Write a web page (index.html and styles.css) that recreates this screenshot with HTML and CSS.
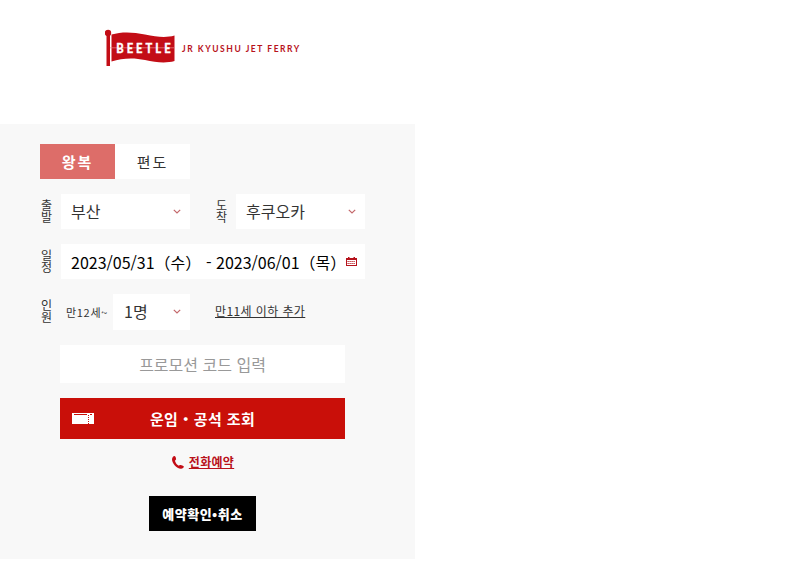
FILE: index.html
```html
<!DOCTYPE html>
<html lang="ko">
<head>
    <meta charset="UTF-8">
    <meta name="viewport" content="width=device-width, initial-scale=1.0">
    <title>BEETLE - JR KYUSHU JET FERRY</title>
    <link rel="stylesheet" href="styles.css">
</head>
<body>
    <header class="header">
        <svg class="logo" width="200" height="40" viewBox="0 0 200 40" role="img" aria-label="BEETLE">
            <circle cx="3" cy="4" r="3.2" fill="#c30d16"/>
            <rect x="1.500" y="5" width="3.500" height="32" fill="#c30d16"/>
            <path d="M6.500 5.500C17 2.500 28 3 40 5.500S61 9 69.500 6.500V32C61 34.500 51 33.500 40 31S17 29 6.500 32.500Z" fill="#c30d16"/>
            <path d="M5 18.800H69.500" stroke="#e78a8e" stroke-width=".7"/>
            <text class="logo-name" x="14" y="24" textLength="68" transform="scale(.8 1)">BEETLE</text>
            <text class="logo-sub" x="90.600" y="23" textLength="138" transform="scale(.85 1)">JR KYUSHU JET FERRY</text>
        </svg>
    </header>

    <form class="booking">
        <div class="tabs">
            <button type="button" class="tab active">왕복</button>
            <button type="button" class="tab">편도</button>
        </div>

        <div class="row">
            <span class="label"><span>출</span><span>발</span></span>
            <div class="select">부산
                <svg class="arrow" width="8" height="5" viewBox="0 0 8 5"><path d="M.8.8 4 4 7.200.8"/></svg>
            </div>
            <span class="label label-to"><span>도</span><span>착</span></span>
            <div class="select">후쿠오카
                <svg class="arrow" width="8" height="5" viewBox="0 0 8 5"><path d="M.8.8 4 4 7.200.8"/></svg>
            </div>
        </div>

        <div class="row">
            <span class="label"><span>일</span><span>정</span></span>
            <div class="dates">
                <span class="date-from">2023/05/31（수）</span>
                <span class="dash">-</span>
                <span class="date-to">2023/06/01（목）</span>
                <svg class="calendar" width="11" height="9" viewBox="0 0 11 9">
                    <path d="M0 1h11v8H0z" fill="#b5121b"/>
                    <path d="M2 0h1.500v2H2zM7.500 0H9v2H7.500z" fill="#b5121b"/>
                    <path d="M1 3h9v5H1z" fill="#fff"/>
                    <path d="M1.500 4.500h8M1.500 6.500h8" stroke="#b5121b" stroke-width="1.200" stroke-dasharray="1.200 .8"/>
                </svg>
            </div>
        </div>

        <div class="row row-people">
            <span class="label"><span>인</span><span>원</span></span>
            <span class="age">만12세~</span>
            <div class="select select-count">1명
                <svg class="arrow" width="8" height="5" viewBox="0 0 8 5"><path d="M.8.8 4 4 7.200.8"/></svg>
            </div>
            <a class="add-child" href="#">만11세 이하 추가</a>
        </div>

        <input class="promo" type="text" placeholder="프로모션 코드 입력">

        <button type="button" class="search">
            <svg class="ticket" width="22" height="11" viewBox="0 0 22 11">
                <path d="M0 0h22v11H0z" fill="#fff"/>
                <path d="M2 1.500h13M18 1.500h2" stroke="#c90f09"/>
                <path d="M16.500 2v9" stroke="#c90f09" stroke-dasharray="1 1"/>
            </svg>
            <span>운임・공석 조회</span>
        </button>

        <a class="phone" href="#">
            <svg width="12" height="13" viewBox="0 0 12 13">
                <path d="M2.600.1C3.600.5 4 2.200 4.100 3.300 3.900 4.200 2.900 4.300 3 5c.5 1.800 1.900 3.700 3.500 4.600.7.200 1.200-.8 2-.7 1.200.2 2.600.8 3.400 1.700.1 1.100-1.600 2.300-3 2.200C4.400 12.200.2 7.500 0 3.400 0 1.800 1.400 0 2.600.1Z" fill="#c30d16"/>
            </svg>
            <span>전화예약</span>
        </a>

        <button type="button" class="confirm">예약확인•취소</button>
    </form>
</body>
</html>
```

FILE: styles.css
```css
* {
  box-sizing: border-box;
}

body {
  margin: 0;
  font-family: "Noto Sans CJK KR", sans-serif;
  color: #333;
  background-color: #fff;
}

button {
  padding: 0;
  border: 0;
  font-family: inherit;
  cursor: pointer;
}

.header {
  height: 124px;
  padding: 29px 0 0 105px;
}

.logo {
  display: block;
}

.logo-name {
  font: 900 14px Lato, sans-serif;
  fill: #fff;
  stroke: #fff;
  stroke-width: .3px;
}

.logo-sub {
  font: bold 10px Lato, sans-serif;
  fill: #b8121b;
}

.booking {
  display: flex;
  flex-direction: column;
  width: 415px;
  height: 435px;
  padding: 20px 50px 0 40px;
  background-color: #f8f8f8;
}

.tabs {
  display: flex;
  width: 150px;
  margin-bottom: 15px;
}

.tab {
  flex: 1;
  height: 35px;
  font-size: 15px;
  letter-spacing: 2px;
  color: #333;
  background-color: #fff;
}

.tab.active {
  font-weight: bold;
  color: #fff;
  background-color: #dd6d69;
}

.row {
  display: flex;
  align-items: center;
  height: 35px;
  margin-bottom: 15px;
}

.row-people {
  height: 36px;
}

.label {
  display: flex;
  flex-direction: column;
  width: 21px;
  padding: 0 0 1px 1px;
  font-size: 12px;
  line-height: 12px;
}

.label-to {
  width: 20px;
  margin-left: 26px;
  padding-left: 0;
}

.row-people .label {
  padding-bottom: 2px;
}

.select {
  display: flex;
  align-items: center;
  justify-content: space-between;
  flex: none;
  width: 129px;
  height: 100%;
  padding: 0 9px 1px 10px;
  font-size: 16px;
  background-color: #fff;
}

.arrow {
  margin-top: 1px;
  fill: none;
  stroke: #c4686b;
  stroke-width: 1.2;
}

.dates {
  display: flex;
  align-items: center;
  flex: none;
  width: 304px;
  height: 100%;
  padding: 0 8px 0 10px;
  font-size: 16px;
  color: #000;
  background-color: #fff;
  white-space: nowrap;
}

.date-from {
  width: 135px;
}

.dash {
  width: 10px;
}

.date-to {
  width: 130px;
}

.calendar {
  flex: none;
}

.age {
  width: 52px;
  padding-left: 5px;
  font-size: 11px;
  letter-spacing: .7px;
  white-space: nowrap;
}

.select-count {
  width: 77px;
  padding: 0 9px 2px 11px;
}

.add-child {
  margin-left: 25px;
  padding-bottom: 3px;
  font-size: 12px;
  letter-spacing: .4px;
  color: #333;
}

.promo {
  width: 285px;
  height: 38px;
  margin: 0 0 15px 20px;
  padding: 0 0 1px;
  border: 0;
  font-family: inherit;
  font-size: 16px;
  text-align: center;
  background-color: #fff;
}

.promo::placeholder {
  color: #999;
}

.search {
  display: flex;
  align-items: center;
  width: 285px;
  height: 41px;
  margin-left: 20px;
  padding: 0 12px;
  font-size: 15px;
  font-weight: bold;
  letter-spacing: .4px;
  color: #fff;
  background-color: #c90f09;
}

.search span {
  flex: 1;
  padding-right: 22px;
}

.phone {
  display: flex;
  align-items: center;
  align-self: center;
  gap: 5px;
  height: 20px;
  margin: 13px 0 24px 1px;
  font-size: 12px;
  font-weight: bold;
  letter-spacing: .3px;
  color: #b8121b;
}

.phone span {
  padding-bottom: 2px;
}

.confirm {
  align-self: center;
  width: 107px;
  height: 35px;
  padding-bottom: 1px;
  font-size: 13px;
  font-weight: 900;
  letter-spacing: .5px;
  color: #fff;
  background-color: #000;
}
```
